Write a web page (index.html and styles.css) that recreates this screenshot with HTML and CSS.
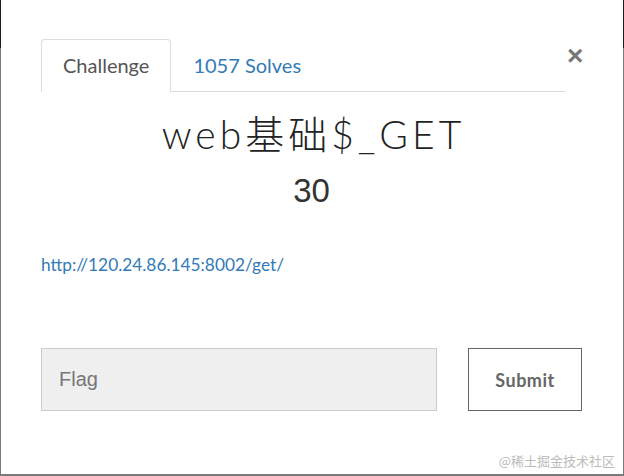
FILE: index.html
```html
<!DOCTYPE html>
<html lang="zh-CN">
<head>
  <meta charset="UTF-8" />
  <title>web基础$_GET</title>
  <link rel="stylesheet" href="styles.css">
</head>
<body>

<div class="frame">
  <div class="modal">
    <div class="modal-head">
      <ul class="nav-tabs">
        <li class="tab active">Challenge</li>
        <li class="tab"><a href="#">1057 Solves</a></li>
      </ul>
      <button class="close" aria-label="Close">&times;</button>
    </div>

    <div class="challenge">
      <h2 class="challenge-name">web基础$_GET</h2>
      <h3 class="challenge-value">30</h3>
      <p class="challenge-desc">
        <a href="#">http://120.24.86.145:8002/get/</a>
      </p>
    </div>

    <form class="flag-form">
      <input class="flag-input" type="text" placeholder="Flag" />
      <button class="submit-btn" type="button">Submit</button>
    </form>

    <div class="watermark">@稀土掘金技术社区</div>
  </div>
</div>

</body>
</html>
```

FILE: styles.css
```css
* {
  margin: 0;
  padding: 0;
  box-sizing: border-box;
}
body {
  font-family: Lato, "Noto Sans CJK SC", sans-serif;
  background: #fff;
  color: #333;
}

.frame {
  height: 476px;
  padding: 0 1px 2px 1px;
  background: linear-gradient(#1c1c1c 48px, #7a7a7a 48px);
}
.modal {
  height: 100%;
  background: #fff;
  padding: 39px 41px 0 40px;
  display: flex;
  flex-direction: column;
}

.modal-head {
  display: flex;
  align-items: flex-start;
}
.nav-tabs {
  list-style: none;
  display: flex;
  flex: 1;
  border-bottom: 1px solid #ddd;
}
.tab {
  font-size: 20px;
  line-height: 24px;
  padding: 13px 21px 14px;
  border: 1px solid transparent;
  border-bottom: none;
  border-radius: 4px 4px 0 0;
  margin-bottom: -1px;
  color: #555;
}
.tab.active {
  border-color: #ddd;
  background: #fff;
  padding-bottom: 15px;
}
.tab a {
  color: #337ab7;
  text-decoration: none;
}
.close {
  border: none;
  background: none;
  font-family: "Liberation Sans", sans-serif;
  font-size: 28px;
  font-weight: bold;
  line-height: 20px;
  color: #777;
  margin: 7px 0 0 2px;
  width: 15px;
  cursor: pointer;
}

.challenge {
  text-align: center;
}
.challenge-name {
  font-family: Lato, "Noto Sans CJK SC", sans-serif;
  font-weight: 300;
  font-size: 39px;
  letter-spacing: 4px;
  line-height: 48px;
  margin-top: 18px;
  padding-left: 4px;
  color: #222;
}
.challenge-value {
  font-family: "Liberation Sans", sans-serif;
  font-weight: normal;
  font-size: 33px;
  line-height: 40px;
  margin-top: 13px;
  color: #333;
}
.challenge-desc {
  text-align: left;
  font-size: 17.3px;
  line-height: 24px;
  margin-top: 42px;
}
.challenge-desc a {
  color: #337ab7;
  text-decoration: none;
}

.flag-form {
  display: flex;
  gap: 31px;
  margin-top: 71px;
}
.flag-input {
  flex: 0 0 396px;
  height: 63px;
  background: #efefef;
  border: 1px solid #ccc;
  padding: 0 17px;
  font-family: "Liberation Sans", sans-serif;
  font-size: 20px;
  color: #555;
}
.flag-input::placeholder {
  color: #777;
}
.submit-btn {
  flex: 0 0 114px;
  height: 63px;
  background: #fff;
  border: 1px solid #666;
  font-family: Lato, sans-serif;
  font-weight: bold;
  font-size: 18px;
  color: #666;
  letter-spacing: 0.5px;
  cursor: pointer;
}

.watermark {
  margin-top: auto;
  align-self: flex-end;
  margin-right: -33px;
  margin-bottom: 4px;
  font-size: 13px;
  color: #bbb;
  font-family: "Noto Sans CJK SC", sans-serif;
}
```
